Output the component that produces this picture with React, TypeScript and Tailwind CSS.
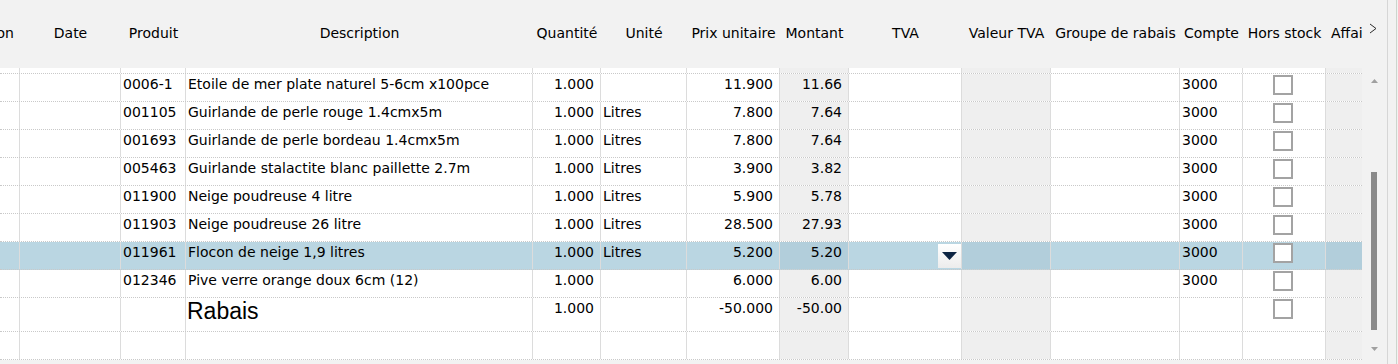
import React from 'react';
import clsx from 'clsx';

// column widths include the right border pixel
const W = [
    'w-[20px]', 'w-[101px]', 'w-[65px]', 'w-[347px]', 'w-[68px]', 'w-[86px]', 'w-[93px]',
    'w-[69px]', 'w-[113px]', 'w-[89px]', 'w-[129px]', 'w-[63px]', 'w-[83px]', 'w-[36px]',
];
const GRAY = [7, 9, 13];

const HEADERS = [
    'Position', 'Date', 'Produit', 'Description', 'Quantité', 'Unité', 'Prix unitaire',
    'Montant', 'TVA', 'Valeur TVA', 'Groupe de rabais', 'Compte', 'Hors stock', 'Affaire',
];

interface Line {
    prod: string;
    desc: string;
    qte: string;
    unite: string;
    prix: string;
    montant: string;
    compte: string;
    selected?: boolean;
    rabais?: boolean;
}

const LINES: Line[] = [
    { prod: '0006-1', desc: 'Etoile de mer plate naturel 5-6cm x100pce', qte: '1.000', unite: '', prix: '11.900', montant: '11.66', compte: '3000' },
    { prod: '001105', desc: 'Guirlande de perle rouge 1.4cmx5m', qte: '1.000', unite: 'Litres', prix: '7.800', montant: '7.64', compte: '3000' },
    { prod: '001693', desc: 'Guirlande de perle bordeau 1.4cmx5m', qte: '1.000', unite: 'Litres', prix: '7.800', montant: '7.64', compte: '3000' },
    { prod: '005463', desc: 'Guirlande stalactite blanc paillette 2.7m', qte: '1.000', unite: 'Litres', prix: '3.900', montant: '3.82', compte: '3000' },
    { prod: '011900', desc: 'Neige poudreuse 4 litre', qte: '1.000', unite: 'Litres', prix: '5.900', montant: '5.78', compte: '3000' },
    { prod: '011903', desc: 'Neige poudreuse 26 litre', qte: '1.000', unite: 'Litres', prix: '28.500', montant: '27.93', compte: '3000' },
    { prod: '011961', desc: 'Flocon de neige 1,9 litres', qte: '1.000', unite: 'Litres', prix: '5.200', montant: '5.20', compte: '3000', selected: true },
    { prod: '012346', desc: 'Pive verre orange doux 6cm (12)', qte: '1.000', unite: '', prix: '6.000', montant: '6.00', compte: '3000' },
    { prod: '', desc: 'Rabais', qte: '1.000', unite: '', prix: '-50.000', montant: '-50.00', compte: '', rabais: true },
];

const cellCls = (i: number, sel?: boolean) =>
    clsx(
        'shrink-0 flex whitespace-nowrap overflow-hidden',
        W[i],
        GRAY.includes(i) && (sel ? 'bg-[#b2cedb]' : 'bg-[#efefef]'),
        i !== 13 && 'border-r border-[#dcdcdc]'
    );

const Checkbox = () => (
    <div className="w-[20px] h-[20px] border-2 border-[#a3a3a3] bg-white" />
);

const TvaDropdown = () => (
    <div className="w-[23px] h-[24px] flex items-center justify-center bg-gradient-to-b from-white to-[#ececec]">
        <svg width="15" height="8" viewBox="0 0 15 8">
            <polygon points="0,0 15,0 7.5,8" fill="#0c2442" />
        </svg>
    </div>
);

const Left = ({ children }: { children: React.ReactNode }) => (
    <span className="pl-[2px] pt-[2px] leading-[16px]">{children}</span>
);
const Right = ({ children }: { children: React.ReactNode }) => (
    <span className="ml-auto pr-[6px] pt-[2px] leading-[16px]">{children}</span>
);

const Row = ({ line }: { line: Line }) => {
    const sel = line.selected;
    return (
        <div
            className={clsx(
                'flex shrink-0 border-b border-dotted border-[#c9c9c9]',
                line.rabais ? 'h-[34px]' : 'h-[28px]',
                sel ? 'bg-[#bad6e2]' : 'bg-white'
            )}
        >
            <div className={cellCls(0, sel)} />
            <div className={cellCls(1, sel)} />
            <div className={cellCls(2, sel)}><Left>{line.prod}</Left></div>
            <div className={cellCls(3, sel)}>
                {line.rabais ? (
                    <span className="pl-[1px] text-[23px] leading-[26px] font-['Liberation_Sans',Arial,sans-serif]">{line.desc}</span>
                ) : (
                    <Left>{line.desc}</Left>
                )}
            </div>
            <div className={cellCls(4, sel)}><Right>{line.qte}</Right></div>
            <div className={cellCls(5, sel)}><Left>{line.unite}</Left></div>
            <div className={cellCls(6, sel)}><Right>{line.prix}</Right></div>
            <div className={cellCls(7, sel)}><Right>{line.montant}</Right></div>
            <div className={clsx(cellCls(8, sel), 'justify-end pt-[2px]')}>
                {sel && <TvaDropdown />}
            </div>
            <div className={cellCls(9, sel)} />
            <div className={cellCls(10, sel)} />
            <div className={cellCls(11, sel)}><Left>{line.compte}</Left></div>
            <div className={clsx(cellCls(12, sel), 'justify-center pr-[3px] pt-[1px]')}>
                <Checkbox />
            </div>
            <div className={cellCls(13, sel)} />
        </div>
    );
};

const EmptyRow = ({ h }: { h: string }) => (
    <div className={clsx('flex shrink-0 border-b border-dotted border-[#c9c9c9] bg-white', h)}>
        {W.map((_, i) => (
            <div key={i} className={cellCls(i)} />
        ))}
    </div>
);

const Scrollbar = () => (
    <div className="w-[25px] shrink-0 flex flex-col bg-[#f2f2f2]">
        <div className="h-[68px] shrink-0 pt-[23px] pl-[7px]">
            <svg width="8" height="11" viewBox="0 0 8 11">
                <polyline points="1,1 7,5.5 1,10" fill="none" stroke="#2a2a2a" strokeWidth="1" />
            </svg>
        </div>
        <div className="mt-[11px] ml-[9px] h-[4px]">
            <svg width="7" height="4" viewBox="0 0 7 4">
                <polygon points="0,4 3.5,0 7,4" fill="#a0a0a0" />
            </svg>
        </div>
        <div className="mt-[89px] ml-[9px] w-[6px] h-[158px] bg-[#8a8a8a]" />
        <div className="mt-[17px] ml-[9px] h-[4px]">
            <svg width="7" height="4" viewBox="0 0 7 4">
                <polygon points="0,0 7,0 3.5,4" fill="#a0a0a0" />
            </svg>
        </div>
    </div>
);

export default function App() {
    return (
        <div className="w-[1398px] h-[364px] flex overflow-hidden bg-[#f2f2f2] text-black text-[14px] font-['DejaVu_Sans',Verdana,sans-serif]">
            <div className="w-[1362px] shrink-0 flex flex-col">
                {/* header */}
                <div className="h-[68px] shrink-0 flex bg-[#f2f2f2]">
                    {HEADERS.map((label, i) => (
                        <div
                            key={label}
                            className={clsx(
                                'shrink-0 flex items-center pb-[3px] whitespace-nowrap overflow-hidden leading-[16px]',
                                W[i],
                                i === 0 ? 'justify-end pr-[6px]' : i === 13 ? 'justify-start pl-[5px]' : 'justify-center'
                            )}
                        >
                            {label}
                        </div>
                    ))}
                </div>

                {/* rows */}
                <EmptyRow h="h-[6px]" />
                {LINES.map((line, i) => (
                    <Row key={i} line={line} />
                ))}
                <EmptyRow h="h-[28px]" />
            </div>

            <Scrollbar />
            <div className="w-px shrink-0 bg-[#d6d6d6]" />
            <div className="w-[10px] shrink-0 flex">
                <div className="w-[8px] bg-[#f2f2f2]" />
                <div className="w-px bg-[#cdd5cd]" />
                <div className="w-px bg-[#f2f2f2]" />
            </div>
        </div>
    );
}
